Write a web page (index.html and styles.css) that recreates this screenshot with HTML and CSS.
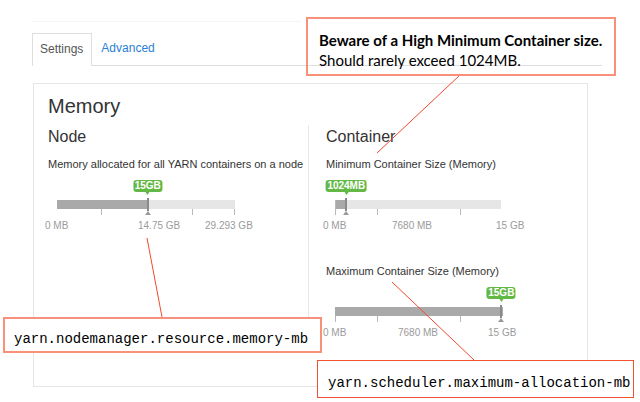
FILE: index.html
```html
<!DOCTYPE html>
<html>
<head>
<meta charset="utf-8">
<link rel="stylesheet" href="styles.css">
</head>
<body>
<div class="page">
  <div class="topline"></div>
  <div class="tabs">
    <div class="tab active">Settings</div>
    <div class="tab link">Advanced</div>
  </div>
  <div class="panel">
    <div class="title">Memory</div>
    <div class="cols">
      <div class="col">
        <div class="heading">Node</div>
        <div class="desc">Memory allocated for all YARN containers on a node</div>
        <div class="slider-wrap">
          <div class="track w178">
            <div class="fill" style="width:51%"></div>
            <div class="tick" style="left:24.7%"></div>
            <div class="tick" style="left:75.8%"></div>
            <div class="tick" style="left:99.5%"></div>
            <div class="handle" style="left:51%">
              <div class="badge">15GB</div>
              <div class="arrow"></div>
            </div>
          </div>
          <div class="labels">
            <span class="lbl" style="left:0px">0 MB</span>
            <span class="lbl" style="left:93px">14.75 GB</span>
            <span class="lbl" style="left:160px">29.293 GB</span>
          </div>
        </div>
      </div>
      <div class="col right">
        <div class="heading">Container</div>
        <div class="desc">Minimum Container Size (Memory)</div>
        <div class="slider-wrap">
          <div class="track w166">
            <div class="fill" style="width:6.8%"></div>
            <div class="tick edge" style="left:0"></div>
            <div class="tick" style="left:25.3%"></div>
            <div class="tick" style="left:75.3%"></div>
            <div class="handle" style="left:6.8%">
              <div class="badge">1024MB</div>
              <div class="arrow"></div>
            </div>
          </div>
          <div class="labels">
            <span class="lbl" style="left:0px">0 MB</span>
            <span class="lbl" style="left:69px">7680 MB</span>
            <span class="lbl" style="left:173px">15 GB</span>
          </div>
        </div>
        <div class="desc second">Maximum Container Size (Memory)</div>
        <div class="slider-wrap">
          <div class="track w168">
            <div class="fill" style="width:100%"></div>
            <div class="tick" style="left:0"></div>
            <div class="tick" style="left:25%"></div>
            <div class="tick" style="left:74.4%"></div>
            <div class="handle" style="left:99%">
              <div class="badge">15GB</div>
              <div class="arrow"></div>
            </div>
          </div>
          <div class="labels">
            <span class="lbl" style="left:0px">0 MB</span>
            <span class="lbl" style="left:75px">7680 MB</span>
            <span class="lbl" style="left:165px">15 GB</span>
          </div>
        </div>
      </div>
    </div>
  </div>

  <svg class="connectors" width="640" height="402" viewBox="0 0 640 402">
    <line x1="460" y1="75" x2="377" y2="153"/>
    <line x1="147" y1="238" x2="162" y2="317"/>
    <line x1="392" y1="282" x2="474" y2="360"/>
  </svg>

  <div class="callout note">
    <div class="strong">Beware of a High Minimum Container size.</div>
    <div>Should rarely exceed 1024MB.</div>
  </div>
  <div class="callout code nm">yarn.nodemanager.resource.memory-mb</div>
  <div class="callout code sched">yarn.scheduler.maximum-allocation-mb</div>
</div>
</body>
</html>
```
FILE: styles.css
```css
* { box-sizing: border-box; }
html, body { margin: 0; padding: 0; background: #fff; }
body { font-family: "Liberation Sans", Arial, sans-serif; color: #333; }

.page {
  position: relative;
  width: 640px;
  height: 402px;
  padding: 21px 0 0 32px;
  overflow: hidden;
}
.topline {
  width: 270px;
  border-top: 1px solid #f5f5f5;
  margin-bottom: 11px;
}
.tabs {
  display: flex;
  align-items: flex-end;
  width: 570px;
  height: 33px;
  border-bottom: 1px solid #dedede;
}
.tab {
  font-size: 12px;
  height: 32px;
  line-height: 31px;
}
.tab.active {
  color: #555;
  padding: 0 8px 0 7px;
  border: 1px solid #dedede;
  border-bottom: none;
  background: #fff;
  margin-bottom: -1px;
  height: 33px;
}
.tab.link {
  color: #2a7fd4;
  padding: 0 9px;
}

.panel {
  margin: 17px 0 0 1px;
  width: 555px;
  height: 304px;
  border: 1px solid #e6e6e6;
  padding: 10px 14px 0 14px;
}
.title {
  font-size: 20px;
  line-height: 24px;
  color: #333;
}
.cols {
  display: grid;
  grid-template-columns: 260px 1fr;
  margin-top: 7px;
}
.col { padding-top: 2px; }
.col.right {
  border-left: 1px solid #e8e8e8;
  padding-left: 17px;
  padding-bottom: 12px;
}
.heading {
  font-size: 16px;
  line-height: 20px;
  color: #333;
}
.desc {
  font-size: 11px;
  line-height: 14px;
  margin-top: 10px;
  color: #333;
}
.desc.second { margin-top: 32px; }

.slider-wrap {
  padding: 29px 0 0 9px;
}
.track {
  position: relative;
  height: 9px;
  background: #e6e6e6;
}
.w178 { width: 178px; }
.w166 { width: 166px; }
.w168 { width: 168px; }
.fill {
  height: 100%;
  background: #a9a9a9;
}
.tick {
  position: absolute;
  top: 9px;
  width: 1px;
  height: 6px;
  background: #b8b8b8;
}
.tick.edge { top: 0; height: 15px; }
.handle {
  position: absolute;
  top: -2px;
  width: 2px;
  height: 13px;
  margin-left: -1px;
  background: #8a8a8a;
}
.arrow {
  position: absolute;
  top: 13px;
  left: -2px;
  width: 0;
  height: 0;
  border-left: 3px solid transparent;
  border-right: 3px solid transparent;
  border-bottom: 4px solid #999;
}
.badge {
  position: absolute;
  bottom: 19px;
  left: 1px;
  transform: translateX(-50%);
  background: #63b846;
  color: #fff;
  font-weight: bold;
  font-size: 10px;
  line-height: 12px;
  padding: 0 1.5px;
  border-radius: 3px;
  white-space: nowrap;
}
.badge::after {
  content: "";
  position: absolute;
  left: 50%;
  top: 12px;
  margin-left: -2px;
  border-left: 2px solid transparent;
  border-right: 2px solid transparent;
  border-top: 3px solid #63b846;
}
.labels {
  position: relative;
  height: 12px;
  margin-top: 11px;
  margin-left: -12px;
}
.lbl {
  position: absolute;
  top: 0;
  font-size: 10px;
  line-height: 12px;
  color: #9b9b9b;
  white-space: nowrap;
}

.connectors {
  position: absolute;
  left: 0;
  top: 0;
  pointer-events: none;
}
.connectors line {
  stroke: #f04a2e;
  stroke-width: 1;
}

.callout {
  position: absolute;
  color: #000;
}
.note {
  left: 306px;
  top: 17px;
  width: 310px;
  height: 59px;
  border: 2px solid #f8907a;
  padding: 11px 0 0 11px;
  font-family: Lato, "Open Sans", sans-serif;
  font-size: 15px;
  line-height: 20px;
  white-space: nowrap;
}
.note .strong { font-weight: bold; }
.code {
  font-family: "Liberation Mono", "Courier New", monospace;
  font-size: 14px;
  line-height: 16px;
  background: #fff;
  white-space: nowrap;
}
.nm {
  left: 3px;
  top: 317px;
  width: 319px;
  height: 36px;
  border: 2px solid #f8907a;
  padding: 12px 0 0 9px;
}
.sched {
  left: 317px;
  top: 360px;
  width: 317px;
  height: 38px;
  border: 1.5px solid #f0522f;
  padding: 14px 0 0 10px;
}
```
